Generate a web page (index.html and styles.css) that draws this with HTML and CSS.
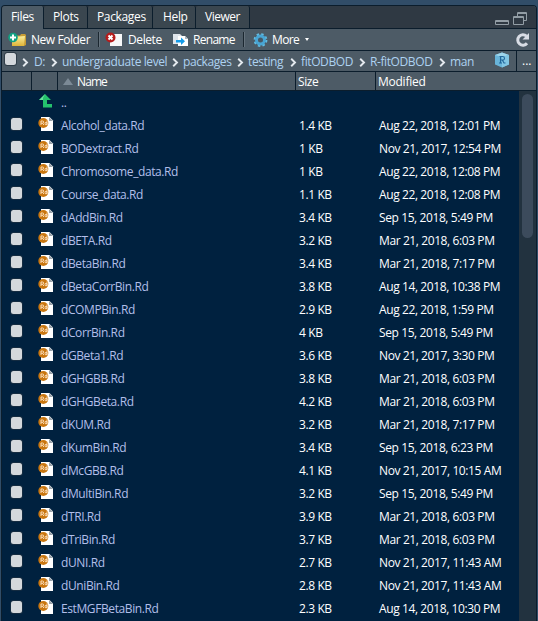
FILE: index.html
```
<!DOCTYPE html>
<html lang="en">
<head>
<meta charset="utf-8">
<title>Files</title>
<link rel="stylesheet" href="styles.css">
</head>
<body>
<svg class="defs" aria-hidden="true">
  <defs>
    <linearGradient id="folder" x1="0" y1="0" x2="0" y2="1"><stop offset="0" stop-color="#fbee9c"/><stop offset="1" stop-color="#dfb437"/></linearGradient>
    <symbol id="rd" viewBox="0 0 16 16">
      <path d="M3 1h8.500l3.500 3.500V15H3z" fill="#fff"/>
      <path d="M11 1v4h4z" fill="#9aa3ab"/>
      <circle cx="5.300" cy="7" r="5" fill="#c9760f"/>
      <path d="M3 9V5h1.500q1.200 0 1.200 1.100T4.500 7.200H3M4.500 7.200l1.400 1.800M9 4.500V9M9 7.500q0-1.200-1-1.200t-1 1.300 1 1.300 1-1.300" fill="none" stroke="#ffe6c8" stroke-width=".9"/>
    </symbol>
  </defs>
</svg>
<main class="pane">
  <nav class="tabs">
    <span class="tab files active">Files</span><span class="tab plots">Plots</span><span class="tab packages">Packages</span><span class="tab help">Help</span><span class="tab viewer">Viewer</span>
    <svg class="window-icons" width="34" height="16" viewBox="0 0 34 16"><g fill="none" stroke="#929da5"><path d="M1.500 9.500h13v4h-13zM1.500 10.500h13"/><path d="M23.500 5.500v-4h9v8h-3M23.500 2.500h9"/><path d="M19.500 5.500h10v8h-10zM19.500 6.500h10"/></g></svg>
  </nav>
  <div class="toolbar">
    <svg class="ico-folder" width="18" height="16" viewBox="0 0 18 16"><path d="M4 3.500h8l1-1.500h4l1 1v10l-2 1H4z" fill="#c79c35"/><path d="M4 5l13-1-1 10H4z" fill="url(#folder)"/><circle cx="5" cy="5.500" r="4.800" fill="#12a182"/><path d="M5 2.500v6M2 5.500h6" stroke="#fff" stroke-width="2"/></svg>
    <span class="new-label">New Folder</span><i class="sep"></i>
    <svg class="ico-delete" width="18" height="16" viewBox="0 0 18 16"><path d="M5 2h12v12H5z" fill="#f7f8f9"/><circle cx="5.500" cy="5.500" r="5" fill="#b51c1c"/><path d="M3.500 3.500l4 4M7.500 3.500l-4 4" stroke="#fff" stroke-width="2"/></svg>
    <span class="delete-label">Delete</span>
    <svg class="ico-rename" width="17" height="14" viewBox="0 0 17 14"><path d="M1 1h7l2 2v8H1z" fill="#dfe5eb"/><path d="M6 3h7l3 3v7H6z" fill="#fff"/><path d="M13 3v3h3" fill="#aab4bd"/><path d="M4 7h5V4.500l4 3.700-4 3.700V9.500H4z" fill="#159be8"/></svg>
    <span class="rename-label">Rename</span><i class="sep"></i>
    <svg class="ico-gear" width="15" height="16" viewBox="0 0 15 16"><circle cx="7.500" cy="8" r="5.600" fill="none" stroke="#62bce2" stroke-width="2.600" stroke-dasharray="2.300 2.100"/><circle cx="7.500" cy="8" r="4" fill="none" stroke="#48a5d4" stroke-width="3"/><circle cx="7.500" cy="8" r="2" fill="#465866"/></svg>
    <span class="more-label">More</span><i class="caret"></i>
    <svg class="refresh" width="15" height="16" viewBox="0 0 15 16"><path d="M11.500 4.200A5.200 5.200 0 1 0 12 11.300" fill="none" stroke="#d8dce4" stroke-width="3"/><path d="M14 1v6.500H7.500z" fill="#d8dce4"/></svg>
  </div>
  <div class="crumbs">
    <i class="check"></i>
    <svg class="chevrons" width="7" height="9" viewBox="0 0 7 9"><path id="chev" d="M1.200 .8L5 4.500 1.200 8.200" fill="none" stroke="#e4e9ee" stroke-width="1.900"/></svg>
    <span class="c-drive">D:</span><svg width="7" height="9"><use href="#chev"/></svg>
    <span class="c-under">undergraduate level</span><svg width="7" height="9"><use href="#chev"/></svg>
    <span class="c-pack">packages</span><svg width="7" height="9"><use href="#chev"/></svg>
    <span class="c-test">testing</span><svg width="7" height="9"><use href="#chev"/></svg>
    <span class="c-fit">fitODBOD</span><svg width="7" height="9"><use href="#chev"/></svg>
    <span class="c-rfit">R-fitODBOD</span><svg width="7" height="9"><use href="#chev"/></svg>
    <span class="c-man">man</span>
    <div class="crumb-end">
      <svg class="project" width="16" height="16" viewBox="0 0 16 16"><path d="M8 .5l7 2.500v9.500L8 15.500 1 12.500V3z" fill="#69b5da"/><path d="M8 .5l7 2.500-7 2-7-2z" fill="#9ed5eb"/><path d="M8 5l7-2v9.500L8 15.500z" fill="#82c6e4"/><path d="M5.500 4.500h3q2 0 2 1.800T8.500 8H6.500M6.500 4.500v6.500M5 11h3M8.300 8l1.700 3h1.500" fill="none" stroke="#22679b" stroke-width="1.100"/></svg>
      <span class="browse">...</span>
    </div>
  </div>
  <div class="head"><span></span><span></span><span class="h-name"><i class="sort"></i>Name</span><span class="h-size">Size</span><span class="h-mod">Modified</span></div>
  <div class="body">
    <div class="list">
      <div class="row up"><i></i><svg class="up-icon" width="14" height="14" viewBox="0 0 14 14"><path d="M6 0l6 6H8v4h5v3.500H4V6H0z" fill="#25c26d"/><path d="M6 0L0 6h4V4z" fill="#66e29b"/></svg><span class="name">..</span></div>
      <div class="row"><i class="check"></i><svg class="rd"><use href="#rd"/></svg><span class="name">Alcohol_data.Rd</span><span>1.4 KB</span><span>Aug 22, 2018, 12:01 PM</span></div>
      <div class="row"><i class="check"></i><svg class="rd"><use href="#rd"/></svg><span class="name">BODextract.Rd</span><span>1 KB</span><span>Nov 21, 2017, 12:54 PM</span></div>
      <div class="row"><i class="check"></i><svg class="rd"><use href="#rd"/></svg><span class="name">Chromosome_data.Rd</span><span>1 KB</span><span>Aug 22, 2018, 12:08 PM</span></div>
      <div class="row"><i class="check"></i><svg class="rd"><use href="#rd"/></svg><span class="name">Course_data.Rd</span><span>1.1 KB</span><span>Aug 22, 2018, 12:08 PM</span></div>
      <div class="row"><i class="check"></i><svg class="rd"><use href="#rd"/></svg><span class="name">dAddBin.Rd</span><span>3.4 KB</span><span>Sep 15, 2018, 5:49 PM</span></div>
      <div class="row"><i class="check"></i><svg class="rd"><use href="#rd"/></svg><span class="name">dBETA.Rd</span><span>3.2 KB</span><span>Mar 21, 2018, 6:03 PM</span></div>
      <div class="row"><i class="check"></i><svg class="rd"><use href="#rd"/></svg><span class="name">dBetaBin.Rd</span><span>3.4 KB</span><span>Mar 21, 2018, 7:17 PM</span></div>
      <div class="row"><i class="check"></i><svg class="rd"><use href="#rd"/></svg><span class="name">dBetaCorrBin.Rd</span><span>3.8 KB</span><span>Aug 14, 2018, 10:38 PM</span></div>
      <div class="row"><i class="check"></i><svg class="rd"><use href="#rd"/></svg><span class="name">dCOMPBin.Rd</span><span>2.9 KB</span><span>Aug 22, 2018, 1:59 PM</span></div>
      <div class="row"><i class="check"></i><svg class="rd"><use href="#rd"/></svg><span class="name">dCorrBin.Rd</span><span>4 KB</span><span>Sep 15, 2018, 5:49 PM</span></div>
      <div class="row"><i class="check"></i><svg class="rd"><use href="#rd"/></svg><span class="name">dGBeta1.Rd</span><span>3.6 KB</span><span>Nov 21, 2017, 3:30 PM</span></div>
      <div class="row"><i class="check"></i><svg class="rd"><use href="#rd"/></svg><span class="name">dGHGBB.Rd</span><span>3.8 KB</span><span>Mar 21, 2018, 6:03 PM</span></div>
      <div class="row"><i class="check"></i><svg class="rd"><use href="#rd"/></svg><span class="name">dGHGBeta.Rd</span><span>4.2 KB</span><span>Mar 21, 2018, 6:03 PM</span></div>
      <div class="row"><i class="check"></i><svg class="rd"><use href="#rd"/></svg><span class="name">dKUM.Rd</span><span>3.2 KB</span><span>Mar 21, 2018, 7:17 PM</span></div>
      <div class="row"><i class="check"></i><svg class="rd"><use href="#rd"/></svg><span class="name">dKumBin.Rd</span><span>3.4 KB</span><span>Sep 15, 2018, 6:23 PM</span></div>
      <div class="row"><i class="check"></i><svg class="rd"><use href="#rd"/></svg><span class="name">dMcGBB.Rd</span><span>4.1 KB</span><span>Nov 21, 2017, 10:15 AM</span></div>
      <div class="row"><i class="check"></i><svg class="rd"><use href="#rd"/></svg><span class="name">dMultiBin.Rd</span><span>3.2 KB</span><span>Sep 15, 2018, 5:49 PM</span></div>
      <div class="row"><i class="check"></i><svg class="rd"><use href="#rd"/></svg><span class="name">dTRI.Rd</span><span>3.9 KB</span><span>Mar 21, 2018, 6:03 PM</span></div>
      <div class="row"><i class="check"></i><svg class="rd"><use href="#rd"/></svg><span class="name">dTriBin.Rd</span><span>3.7 KB</span><span>Mar 21, 2018, 6:03 PM</span></div>
      <div class="row"><i class="check"></i><svg class="rd"><use href="#rd"/></svg><span class="name">dUNI.Rd</span><span>2.7 KB</span><span>Nov 21, 2017, 11:43 AM</span></div>
      <div class="row"><i class="check"></i><svg class="rd"><use href="#rd"/></svg><span class="name">dUniBin.Rd</span><span>2.8 KB</span><span>Nov 21, 2017, 11:43 AM</span></div>
      <div class="row"><i class="check"></i><svg class="rd"><use href="#rd"/></svg><span class="name">EstMGFBetaBin.Rd</span><span>2.3 KB</span><span>Aug 14, 2018, 10:30 PM</span></div>
    </div>
    <div class="scroll"><i class="thumb"></i></div>
  </div>
</main>
</body>
</html>
```
FILE: styles.css
```
* { box-sizing: border-box; }
body { margin: 0; height: 621px; overflow: hidden; background: #314d68; font: 12px/16px "Open Sans", "Noto Sans", sans-serif; letter-spacing: -.4px; color: #fff; padding: 5px 1px 0; }
.defs { position: absolute; width: 0; height: 0; }
svg { display: block; flex: none; }
span { white-space: nowrap; flex: none; }
.pane { height: 616px; border: 1px solid #0b1d2c; border-bottom: 0; border-radius: 4px 4px 0 0; overflow: hidden; background: #4d5b66; display: flex; flex-direction: column; }
.tabs { height: 23px; display: flex; background: #2f3943; box-shadow: inset 0 -1px #0b1d2c; flex: none; letter-spacing: -.35px; }
.tab { border-right: 1px solid #0b1d2c; border-bottom: 1px solid #0b1d2c; background: #3a464f; padding: 3px 0 0 9px; border-radius: 2px 2px 0 0; }
.tab.active { background: #4d5b66; border-bottom: 0; }
.files { width: 42px; }
.plots { width: 44px; }
.packages { width: 65px; }
.help { width: 43px; padding-left: 10px; }
.viewer { width: 54px; letter-spacing: -.5px; }
.window-icons { margin: 5px 8px 0 auto; }
.toolbar { height: 22px; display: flex; align-items: center; border-bottom: 1px solid #0b1d2c; flex: none; padding-left: 6px; }
.toolbar span { padding-top: 1px; }
.ico-folder { margin-right: 5px; }
.new-label { width: 67px; letter-spacing: -.45px; }
.sep { width: 2px; height: 15px; border-left: 1px solid #1b2730; border-right: 1px solid #65727c; }
.ico-delete { margin: 0 5px 0 5px; }
.delete-label { width: 44px; }
.ico-rename { margin-right: 4px; }
.rename-label { width: 50px; letter-spacing: -.7px; }
.ico-gear { margin: 0 4px 0 8px; }
.more-label { width: 33px; letter-spacing: -.6px; }
.caret { border: 2px solid transparent; border-top: 3px solid #fff; border-bottom: 0; }
.refresh { margin: 0 6px 0 auto; }
.crumbs { height: 21px; display: flex; align-items: center; border-bottom: 1px solid #0b1d2c; flex: none; color: #add2f1; padding-left: 2px; }
.check { width: 12px; height: 12px; border-radius: 2.500px; background: #d4d8dc; box-shadow: 0 0 0 1px #303e49; flex: none; }
.crumbs .check { width: 11px; margin: -4px 6px 0 1px; }
.crumbs > svg { margin-top: 2px; }
.chevrons { margin-right: 5px; }
.crumbs span { margin-right: 4px; padding-top: 2px; }
.crumbs span + svg { margin-right: 4px; }
.crumbs .c-drive { width: 13px; }
.crumbs .c-under { width: 106px; }
.crumbs .c-pack { width: 50px; }
.crumbs .c-test { width: 38px; }
.crumbs .c-fit { width: 54px; }
.crumbs .c-rfit { width: 65px; }
.crumb-end { margin-left: auto; display: flex; align-items: center; height: 20px; }
.project { margin: -2px 6px 0 0; }
.crumbs .browse { width: 20px; height: 20px; margin: 0; padding: 2px 0 0 5px; border-left: 1px solid #0b1d2c; color: #fff; letter-spacing: 0; }
.head { height: 19px; display: grid; grid-template-columns: 30px 26px 238px 80px 1fr; border-bottom: 1px solid #0b1d2c; flex: none; }
.head span { border-right: 1px solid #0b1d2c; padding: 2px 0 0 2px; }
.head .h-mod { border-right: 0; letter-spacing: -.25px; }
.head .h-name { display: flex; padding-left: 5px; letter-spacing: -.9px; }
.sort { width: 0; height: 0; border: 5px solid transparent; border-top: 0; border-bottom: 7px solid #7c8a96; margin: 4px 4px 0 0; }
.body { flex: 1; display: flex; background: #00213f; min-height: 0; }
.list { flex: 1; }
.row { height: 23px; display: grid; grid-template-columns: 28px 23px 238px 80px 1fr; align-items: center; padding-left: 8px; }
.row > span { padding-top: 1px; }
.row .name { color: #b2bfe9; }
.row .check { width: 11px; margin: -4px 0 0 1px; box-shadow: 0 0 0 1px #142b40; }
.rd { width: 16px; height: 16px; margin-top: -3px; }
.up-icon { margin: -3px 0 0 1px; }
.scroll { width: 17px; background: #22323f; padding: 3px; }
.thumb { display: block; width: 11px; height: 144px; border-radius: 6px; background: #3c4b5c; }
```
